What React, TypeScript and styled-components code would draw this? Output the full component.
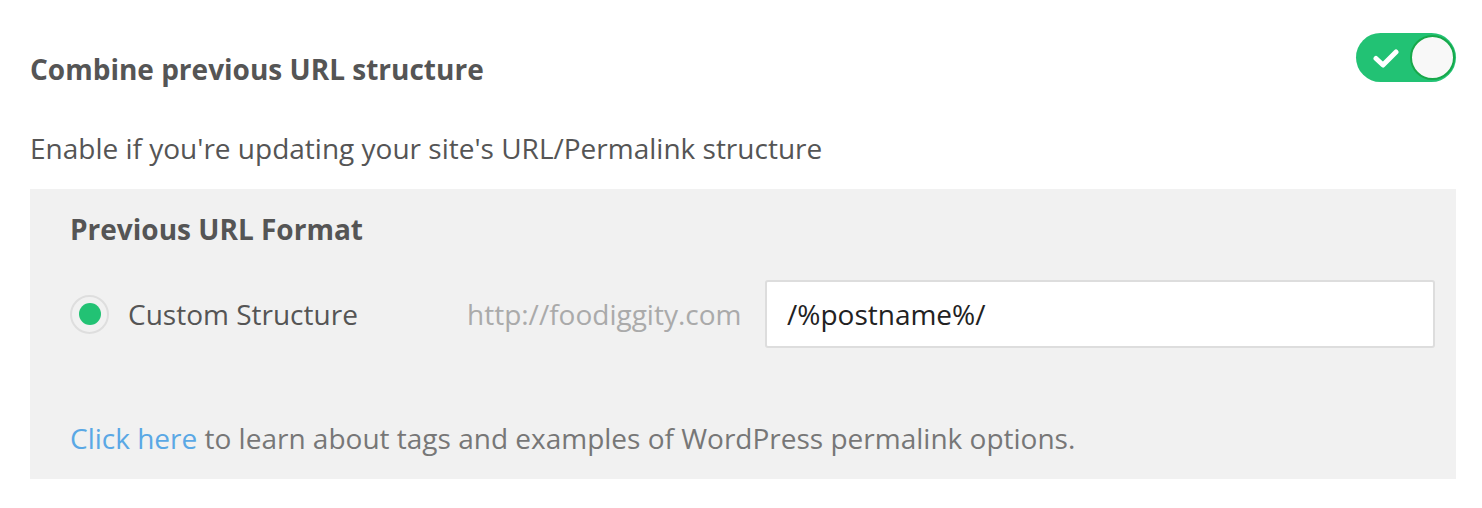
import React from "react";
import styled, { createGlobalStyle } from "styled-components";

const Global = createGlobalStyle`
  html, body { margin: 0; padding: 0; background: #ffffff; }
  body { font-family: "Open Sans", "Liberation Sans", sans-serif; }
`;

const Page = styled.div`
  padding: 33px 26px 0 30px;
  font-family: "Open Sans", "Liberation Sans", sans-serif;
`;

const Header = styled.div`
  display: flex;
  justify-content: space-between;
  align-items: flex-start;
`;

const Title = styled.h2`
  margin: 18px 0 0;
  font-size: 28px;
  line-height: 36px;
  font-weight: 700;
  color: #555555;
`;

const Toggle = styled.div<{ $on: boolean }>`
  width: 100px;
  height: 49px;
  border-radius: 25px;
  background: ${(p) => (p.$on ? "#22c274" : "#cccccc")};
  display: flex;
  align-items: center;
  justify-content: space-between;
  padding: 0 1px 0 17px;
  box-sizing: border-box;
`;

const Knob = styled.div`
  width: 45px;
  height: 45px;
  border-radius: 50%;
  background: #f8f8f8;
  border: 2px solid #17a84a;
  box-sizing: border-box;
`;

const Description = styled.p`
  margin: 43px 0 23px;
  font-size: 28px;
  line-height: 36px;
  color: #555555;
`;

const Panel = styled.div`
  background: #f1f1f1;
  padding: 22px 21px 23px 40px;
`;

const PanelTitle = styled.h3`
  margin: 0;
  font-size: 28px;
  line-height: 36px;
  font-weight: 700;
  color: #555555;
`;

const Row = styled.div`
  display: flex;
  align-items: center;
  margin-top: 33px;
`;

const RadioLabel = styled.label`
  width: 397px;
  display: flex;
  align-items: center;
  gap: 19px;
  font-size: 28px;
  color: #555555;
`;

const Radio = styled.span<{ $checked: boolean }>`
  width: 39px;
  height: 39px;
  border-radius: 50%;
  border: 2px solid #dedede;
  box-sizing: border-box;
  display: flex;
  align-items: center;
  justify-content: center;
  &::after {
    content: "";
    width: 22px;
    height: 22px;
    border-radius: 50%;
    background: ${(p) => (p.$checked ? "#22c274" : "transparent")};
  }
`;

const Prefix = styled.span`
  width: 298px;
  font-size: 28px;
  color: #aaaaaa;
`;

const Input = styled.input`
  flex: 1;
  height: 68px;
  box-sizing: border-box;
  border: 2px solid #dddddd;
  border-radius: 3px;
  background: #ffffff;
  padding: 0 20px;
  font-family: "Open Sans", "Liberation Sans", sans-serif;
  font-size: 28px;
  color: #222222;
  outline: none;
`;

const Help = styled.p`
  margin: 72px 0 0;
  font-size: 28px;
  line-height: 36px;
  color: #777777;
`;

const Link = styled.a`
  color: #5aa8e5;
  text-decoration: none;
`;

const Check = () => (
  <svg width="26" height="20" viewBox="0 0 26 20">
    <path d="M3 10.5 L10 17 L23 4" fill="none" stroke="#ffffff" strokeWidth="5" strokeLinecap="round" strokeLinejoin="round" />
  </svg>
);

export default function App() {
  return (
    <Page>
      <Global />
      <Header>
        <Title>Combine previous URL structure</Title>
        <Toggle $on>
          <Check />
          <Knob />
        </Toggle>
      </Header>
      <Description>Enable if you're updating your site's URL/Permalink structure</Description>
      <Panel>
        <PanelTitle>Previous URL Format</PanelTitle>
        <Row>
          <RadioLabel>
            <Radio $checked />
            Custom Structure
          </RadioLabel>
          <Prefix>http://foodiggity.com</Prefix>
          <Input defaultValue="/%postname%/" />
        </Row>
        <Help>
          <Link href="#">Click here</Link> to learn about tags and examples of WordPress permalink options.
        </Help>
      </Panel>
    </Page>
  );
}
